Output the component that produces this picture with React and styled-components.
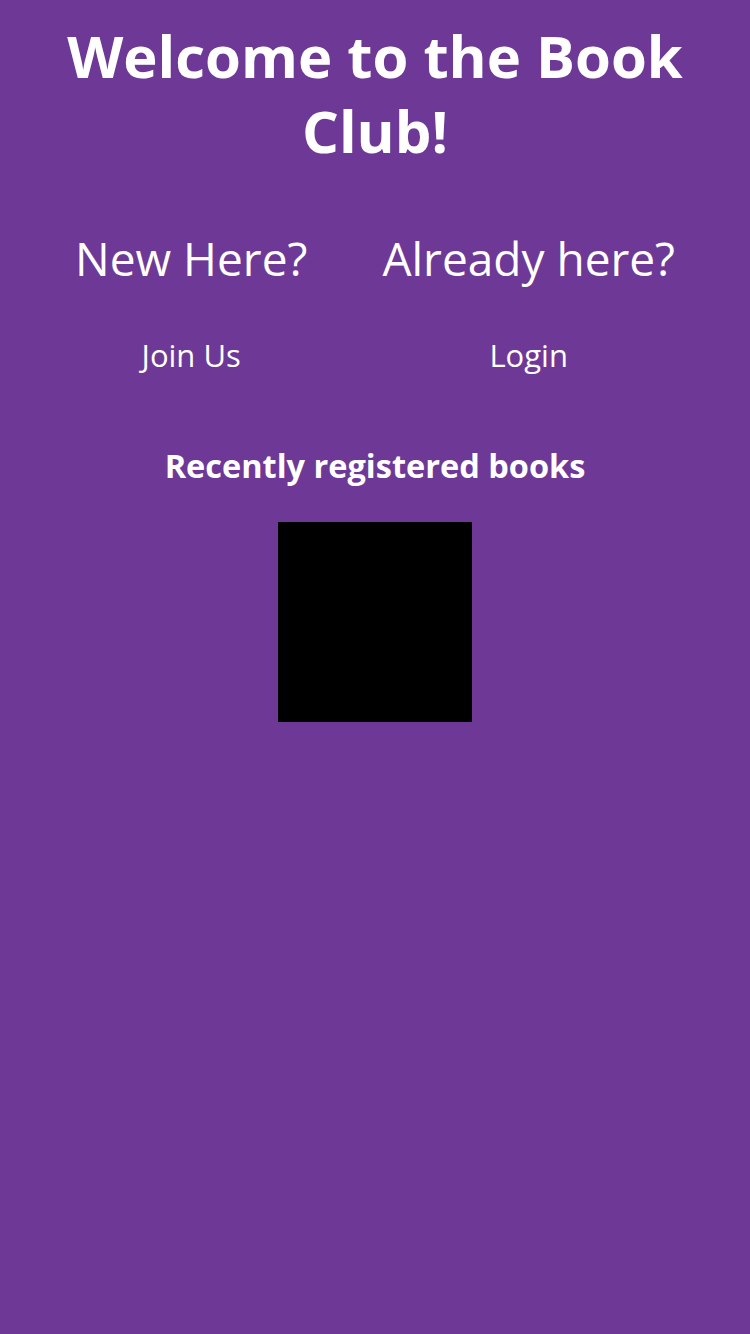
import React from 'react';
import styled, { createGlobalStyle } from 'styled-components';

const GlobalStyle = createGlobalStyle`
  html, body {
    margin: 0;
    padding: 0;
    background: #6e3996;
  }
  body {
    font-family: "Open Sans", "Noto Sans", sans-serif;
    color: #ffffff;
  }
`;

const Page = styled.div`
  min-height: 1334px;
  background: #6e3996;
  display: flex;
  flex-direction: column;
  align-items: center;
  padding-top: 18px;
  box-sizing: border-box;
`;

const Title = styled.h1`
  margin: 0;
  width: 640px;
  font-size: 58px;
  line-height: 75px;
  font-weight: 700;
  text-align: center;
`;

const Choices = styled.div`
  width: 100%;
  display: flex;
  justify-content: space-evenly;
  margin-top: 62px;
`;

const Choice = styled.div`
  display: flex;
  flex-direction: column;
  align-items: center;
`;

const ChoiceHeading = styled.h2`
  margin: 0;
  font-size: 46px;
  line-height: 56px;
  font-weight: 400;
  white-space: nowrap;
`;

const ChoiceLink = styled.a`
  margin-top: 49px;
  font-size: 31px;
  line-height: 40px;
  color: #ffffff;
  text-decoration: none;
  cursor: pointer;
`;

const SectionTitle = styled.h3`
  margin: 71px 0 0;
  font-size: 32.5px;
  line-height: 40px;
  font-weight: 700;
`;

const BookList = styled.div`
  margin-top: 36px;
  display: flex;
  justify-content: center;
  gap: 20px;
`;

const BookCover = styled.div`
  width: 194px;
  height: 200px;
  background: #000000;
`;

export default function App() {
  return (
    <>
      <GlobalStyle />
      <Page>
        <Title>Welcome to the Book Club!</Title>
        <Choices>
          <Choice>
            <ChoiceHeading>New Here?</ChoiceHeading>
            <ChoiceLink>Join Us</ChoiceLink>
          </Choice>
          <Choice>
            <ChoiceHeading>Already here?</ChoiceHeading>
            <ChoiceLink>Login</ChoiceLink>
          </Choice>
        </Choices>
        <SectionTitle>Recently registered books</SectionTitle>
        <BookList>
          <BookCover />
        </BookList>
      </Page>
    </>
  );
}
